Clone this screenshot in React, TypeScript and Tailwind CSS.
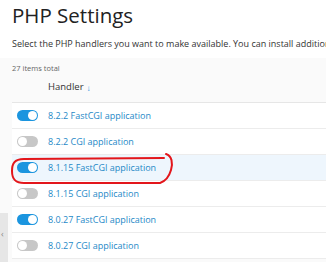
const rows = [
  { label: "8.2.2 FastCGI application", on: true },
  { label: "8.2.2 CGI application", on: false },
  { label: "8.1.15 FastCGI application", on: true, selected: true },
  { label: "8.1.15 CGI application", on: false },
  { label: "8.0.27 FastCGI application", on: true },
  { label: "8.0.27 CGI application", on: false },
];

function Toggle({ on }: { on: boolean }) {
  return (
    <span
      className={`flex h-[11px] w-[21px] shrink-0 items-center rounded-full px-[1px] ${
        on ? "justify-end bg-[#1b95df]" : "justify-start bg-[#c7c7c7]"
      }`}
    >
      <span className="h-[9px] w-[9px] rounded-full bg-white" />
    </span>
  );
}

export default function App() {
  return (
    <div
      className="relative h-[262px] w-[326px] overflow-hidden bg-[#fafafa] text-[#333]"
      style={{ fontFamily: '"Open Sans", sans-serif' }}
    >
      <div className="bg-white pb-[8px] pl-3 pt-[1px]">
        <h1 className="text-[20.5px] leading-[28px] text-[#222]">PHP Settings</h1>
        <p className="mt-[9px] whitespace-nowrap text-[9px] leading-[12px]">
          Select the PHP handlers you want to make available. You can install additional PHP handlers.
        </p>
      </div>
      <p className="ml-3 mt-[5px] text-[7.5px] leading-[10px] text-[#666]">27 items total</p>

      <div className="ml-3">
        {/* Header */}
        <div className="flex h-[30px] items-center border-b border-[#e6e6e6] pl-9 text-[9.5px]">
          Handler <span className="ml-[3px] text-[8px] text-[#1b95df]">↓</span>
        </div>

        {rows.map((r) => (
          <div
            key={r.label}
            className={`flex h-[26px] items-center gap-[10px] border-b border-[#ececec] pl-[5px] ${
              r.selected ? "bg-[#eef6fd]" : "bg-white"
            }`}
          >
            <Toggle on={r.on} />
            <span className="text-[9px] text-[#2589c7]">{r.label}</span>
          </div>
        ))}
      </div>

      {/* red hand-drawn mark */}
      <svg className="pointer-events-none absolute left-0 top-0" width="326" height="262">
        <path
          d="M 166 154 C 172 156, 173 163, 171 170 C 169 177, 166 181, 160 183 L 24 183 C 15 183, 12 179, 12 171 C 12 164, 14 159, 24 159 L 164 158"
          fill="none"
          stroke="#e3161b"
          strokeWidth="2"
          strokeLinecap="round"
        />
      </svg>

      {/* collapsed side panel */}
      <div className="absolute bottom-0 left-0 top-[213px] flex w-[8px] items-start bg-[#e6e6e6] pt-[16px]">
        <span className="ml-[1px] text-[9px] leading-none text-[#888]">‹</span>
      </div>
    </div>
  );
}
